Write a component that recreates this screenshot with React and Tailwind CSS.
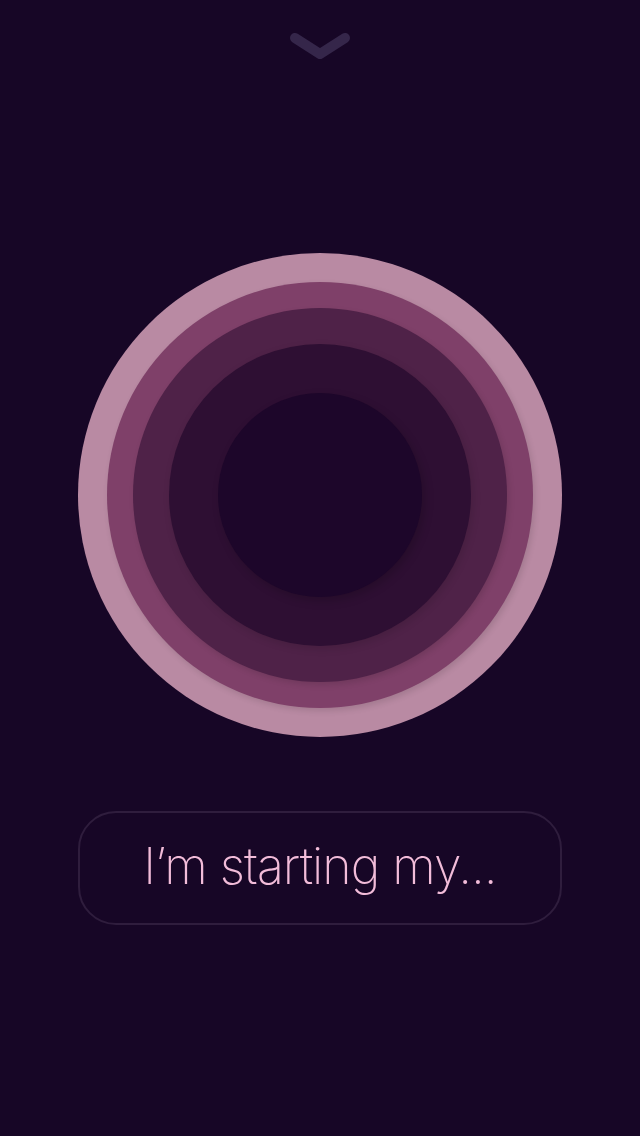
import React from 'react';

const App = () => {
    return (
        <div className="w-[640px] h-[1136px] bg-[#170626] flex flex-col items-center overflow-hidden" style={{ fontFamily: 'Inter, "Liberation Sans", sans-serif' }}>
            <div className="pt-[28px] h-[70px]">
                <svg width="64" height="36" viewBox="0 0 64 36">
                    <polyline points="7,10 32,26 57,10" fill="none" stroke="#35264a" strokeWidth="10" strokeLinecap="round" strokeLinejoin="round" />
                </svg>
            </div>

            {/* rings */}
            <div className="mt-[183px] w-[484px] h-[484px] rounded-full bg-[#b98aa3] flex items-center justify-center">
                <div className="w-[426px] h-[426px] rounded-full bg-[#7f4069] flex items-center justify-center shadow-[2px_3px_6px_rgba(0,0,0,0.12)]">
                    <div className="w-[374px] h-[374px] rounded-full bg-[#4f2248] flex items-center justify-center shadow-[2px_3px_6px_rgba(0,0,0,0.12)]">
                        <div className="w-[302px] h-[302px] rounded-full bg-[#2e0f33] flex items-center justify-center shadow-[2px_3px_8px_rgba(0,0,0,0.12)]">
                            <div className="w-[204px] h-[204px] rounded-full bg-[#1d062a] shadow-[3px_4px_10px_rgba(0,0,0,0.18)]" />
                        </div>
                    </div>
                </div>
            </div>

            <button className="mt-[74px] w-[484px] h-[114px] rounded-[38px] border-2 border-[#2f1d3d] flex items-center justify-center pb-[4px] text-[#f2bcd9] text-[50px] font-extralight tracking-[-1px]">
                I’m starting my...
            </button>
        </div>
    );
};

export default App;
